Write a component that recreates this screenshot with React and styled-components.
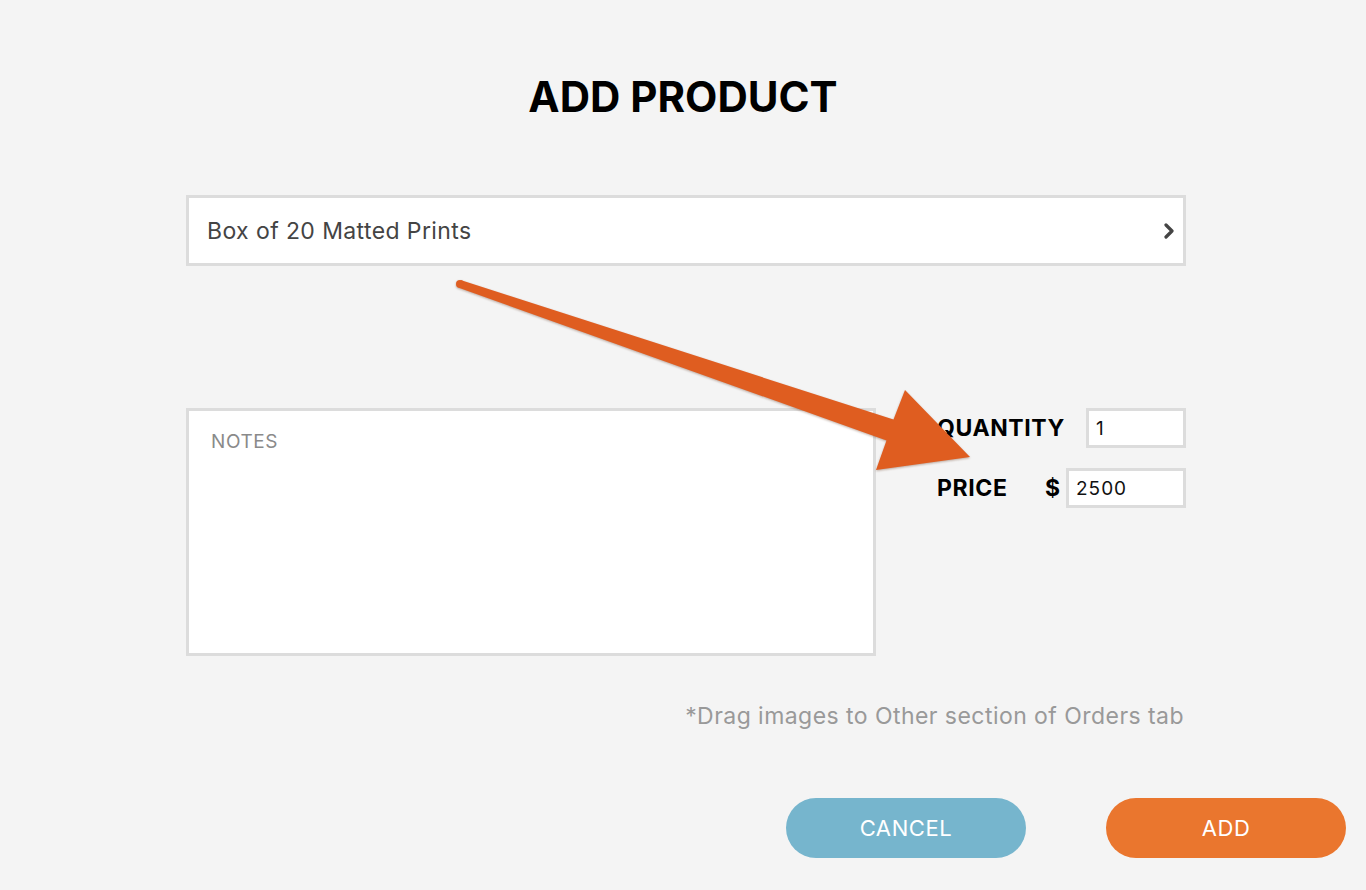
import React from 'react';
import styled, { createGlobalStyle } from 'styled-components';

const GlobalStyle = createGlobalStyle`
  html, body {
    margin: 0;
    padding: 0;
    background: #f4f4f4;
    font-family: Inter, "Liberation Sans", sans-serif;
  }
`;

const Page = styled.div`
  position: relative;
  width: 1366px;
  height: 890px;
  overflow: hidden;
  background: #f4f4f4;
`;

const Title = styled.h1`
  margin: 0;
  padding-top: 75px;
  text-align: center;
  font-size: 42px;
  line-height: 44px;
  font-weight: 700;
  color: #000;
`;

const Form = styled.div`
  width: 1000px;
  margin-left: 186px;
  margin-top: 76px;
`;

const Select = styled.div`
  box-sizing: border-box;
  height: 71px;
  display: flex;
  align-items: center;
  justify-content: space-between;
  padding: 0 8px 0 18px;
  background: #fff;
  border: 3px solid #dcdcdc;
  font-size: 23px;
  letter-spacing: 0.4px;
  color: #444;
`;

const DetailRow = styled.div`
  display: flex;
  margin-top: 142px;
  gap: 61px;
`;

const Notes = styled.div`
  box-sizing: border-box;
  width: 690px;
  height: 248px;
  padding: 20px 22px;
  background: #fff;
  border: 3px solid #dcdcdc;
  font-size: 19px;
  line-height: 22px;
  letter-spacing: 0.6px;
  color: #8a8a8a;
`;

const Fields = styled.div`
  flex: 1;
  display: flex;
  flex-direction: column;
  gap: 20px;
`;

const Field = styled.div`
  display: flex;
  align-items: center;
  height: 40px;
`;

const Label = styled.span`
  flex: 1;
  font-size: 23px;
  font-weight: 700;
  letter-spacing: 0.6px;
  color: #000;
`;

const Currency = styled.span`
  font-size: 23px;
  font-weight: 700;
  margin-right: 6px;
`;

const Input = styled.div`
  box-sizing: border-box;
  width: ${p => p.$w}px;
  height: 40px;
  display: flex;
  align-items: center;
  padding-left: 7px;
  background: #fff;
  border: 3px solid #dcdcdc;
  font-size: 19px;
  letter-spacing: 1px;
  color: #111;
`;

const Hint = styled.p`
  margin: 46px 2px 0 0;
  text-align: right;
  font-size: 23px;
  letter-spacing: 0.45px;
  color: #999;
`;

const Buttons = styled.div`
  display: flex;
  justify-content: flex-end;
  gap: 80px;
  padding-right: 20px;
  margin-top: 68px;
`;

const Button = styled.button`
  width: 240px;
  height: 60px;
  border: none;
  border-radius: 30px;
  background: ${p => p.$bg};
  color: #fff;
  font-family: Inter, "Liberation Sans", sans-serif;
  font-size: 22px;
  font-weight: 400;
  letter-spacing: 0.6px;
  cursor: pointer;
`;

const Arrow = styled.svg`
  position: absolute;
  left: 0;
  top: 0;
  pointer-events: none;
  filter: drop-shadow(0 1px 1px rgba(80, 30, 0, 0.35));
`;

const Chevron = () => (
  <svg width="12" height="16" viewBox="0 0 12 16">
    <path d="M3 2 L9 8 L3 14" fill="none" stroke="#444" strokeWidth="3.2" strokeLinecap="round" strokeLinejoin="round" />
  </svg>
);

export default function App() {
  return (
    <Page>
      <GlobalStyle />
      <Title>ADD PRODUCT</Title>
      <Form>
        <Select>
          <span>Box of 20 Matted Prints</span>
          <Chevron />
        </Select>
        <DetailRow>
          <Notes>NOTES</Notes>
          <Fields>
            <Field>
              <Label>QUANTITY</Label>
              <Input $w={100}>1</Input>
            </Field>
            <Field>
              <Label>PRICE</Label>
              <Currency>$</Currency>
              <Input $w={120}>2500</Input>
            </Field>
          </Fields>
        </DetailRow>
        <Hint>*Drag images to Other section of Orders tab</Hint>
      </Form>
      <Buttons>
        <Button $bg="#76b5cd">CANCEL</Button>
        <Button $bg="#ea762e">ADD</Button>
      </Buttons>
      <Arrow width="1366" height="890" viewBox="0 0 1366 890">
        <g fill="#df5d20">
          <polygon points="461.3,280.2 893.5,419.6 905,390 970,457 876,470 886.5,440.4 458.7,287.8" />
          <circle cx="460" cy="284" r="4" />
        </g>
      </Arrow>
    </Page>
  );
}
